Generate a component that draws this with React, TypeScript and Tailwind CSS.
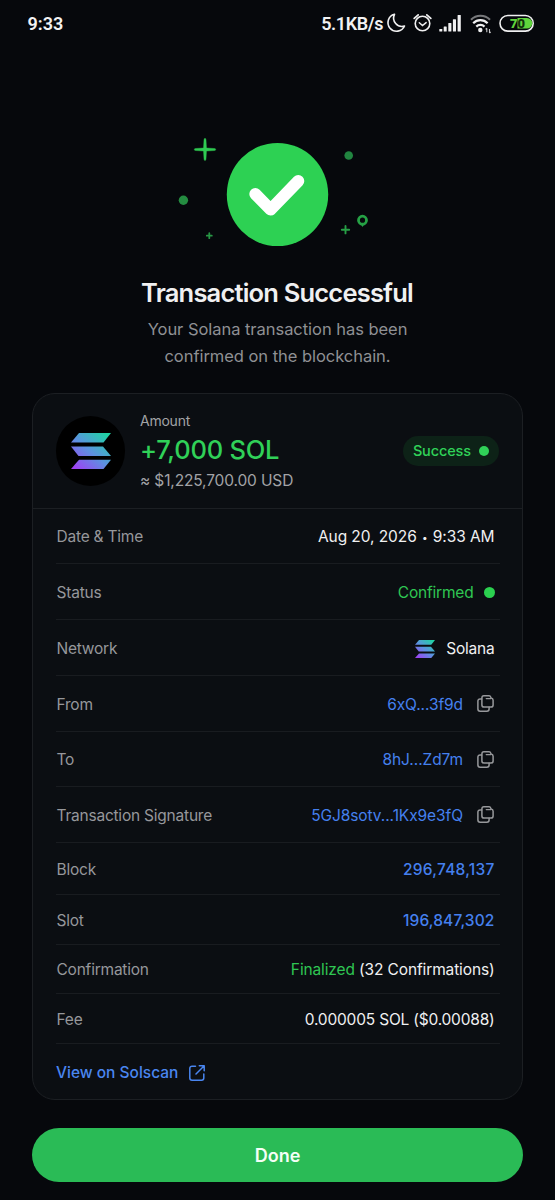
import { useId, type ReactNode } from "react";

type Row = { label: string; height: string; value: ReactNode };

function SolanaMark({ className }: { className?: string }) {
  const id = useId();

  return (
    <svg viewBox="0 0 40 36" className={className} preserveAspectRatio="none" aria-hidden="true">
      <defs>
        <linearGradient id={id} gradientUnits="userSpaceOnUse" x1="4" y1="36" x2="34" y2="0">
          <stop offset="0" stopColor="#a040f5" />
          <stop offset="0.5" stopColor="#5c92e0" />
          <stop offset="1" stopColor="#20d3a5" />
        </linearGradient>
      </defs>
      <g fill={`url(#${id})`}>
        <path d="M8 0h32l-7.500 9.500H0z" />
        <path d="M0 13.500h32l8 9.500H7.500z" />
        <path d="M8 26.800h32l-7.500 9.200H0z" />
      </g>
    </svg>
  );
}

function CopyIcon() {
  return (
    <svg
      width="17"
      height="17"
      viewBox="0 0 17 17"
      fill="none"
      stroke="#97989b"
      strokeWidth="1.5"
      strokeLinecap="round"
      strokeLinejoin="round"
      aria-hidden="true"
    >
      <path d="M6.900.8h5.200c1.400 0 1.600 1.200 2 2.200 1.400.2 2 .9 2 2.200v4.700a2.200 2.200 0 0 1-2.200 2.200H7.100a2.200 2.200 0 0 1-2.200-2.200V2.900A2.100 2.100 0 0 1 6.900.8z" />
      <path d="M9.200 3.600h4.600" strokeWidth="1.200" />
      <path d="M4.700 3.900H3A2.100 2.100 0 0 0 .9 6v8A2.200 2.200 0 0 0 3.100 16.200h6.800a2.200 2.200 0 0 0 2.200-2.200v-1.700" />
    </svg>
  );
}

function ExternalIcon() {
  return (
    <svg
      width="16"
      height="16"
      viewBox="0 0 16 16"
      fill="none"
      stroke="#4a86f0"
      strokeWidth="1.500"
      strokeLinecap="round"
      strokeLinejoin="round"
      aria-hidden="true"
    >
      <path d="M6.500 1.200H3A2.200 2.200 0 0 0 .8 3.400V13A2.200 2.200 0 0 0 3 15.200h9.600a2.200 2.200 0 0 0 2.200-2.200V9" />
      <path d="M10.300.8h4.900v5M15 1L7 9" />
    </svg>
  );
}

function Address({ children }: { children: ReactNode }) {
  return (
    <span className="flex items-center gap-[14px] pr-[0.500px] tracking-[-0.080px] text-[#4580ee]">
      {children}
      <button aria-label="Copy" className="pb-[2px]">
        <CopyIcon />
      </button>
    </span>
  );
}

const rows: Row[] = [
  {
    label: "Date & Time",
    height: "h-[55px]",
    value: (
      <span className="tracking-[-0.080px]">
        Aug 20, 2026 <span className="mx-[1px] align-[1px] text-[10px]">&bull;</span> 9:33 AM
      </span>
    ),
  },
  {
    label: "Status",
    height: "h-14",
    value: (
      <span className="flex items-center gap-[10px] tracking-[-0.200px] text-[#2fc653]">
        Confirmed
        <span className="size-[11px] rounded-full bg-[#2bd04f]" />
      </span>
    ),
  },
  {
    label: "Network",
    height: "h-14",
    value: (
      <span className="flex items-center gap-[11px] tracking-[-0.200px]">
        <SolanaMark className="h-[18px] w-[20px]" />
        Solana
      </span>
    ),
  },
  { label: "From", height: "h-14", value: <Address>6xQ...3f9d</Address> },
  { label: "To", height: "h-[55px]", value: <Address>8hJ...Zd7m</Address> },
  { label: "Transaction Signature", height: "h-14", value: <Address>5GJ8sotv...1Kx9e3fQ</Address> },
  {
    label: "Block",
    height: "h-[52px]",
    value: <span className="font-medium tracking-[0.230px] text-[#4580ee]">296,748,137</span>,
  },
  {
    label: "Slot",
    height: "h-[50px]",
    value: <span className="font-medium tracking-[0.120px] text-[#4580ee]">196,847,302</span>,
  },
  {
    label: "Confirmation",
    height: "h-[49px]",
    value: (
      <span className="tracking-[-0.130px]">
        <span className="text-[#2fc653]">Finalized</span> (32 Confirmations)
      </span>
    ),
  },
  {
    label: "Fee",
    height: "h-[50px]",
    value: <span className="tracking-[-0.200px]">0.000005 SOL ($0.00088)</span>,
  },
];

function StatusBar() {
  return (
    <header className="flex h-[46px] items-center justify-between pr-[19px] pl-[27.500px] font-[Roboto,sans-serif] text-[18px] font-semibold text-[#f2f2f3]">
      <span>9:33</span>
      <div className="flex items-center">
        <span className="mr-[1px] tracking-[-0.400px]">5.1KB/s</span>
        <svg width="152" height="24" viewBox="384 11 152 24" fill="none" stroke="#f0f0f1" aria-hidden="true">
          <path
            d="M394.500 14.300a8.600 8.600 0 1 0 10 11.700a8.400 8.400 0 0 1-10-11.700z"
            strokeWidth="1.600"
            strokeLinejoin="round"
          />
          <circle cx="422.500" cy="23.500" r="7.300" strokeWidth="1.600" />
          <path d="M419.300 22.800l3.200 2.800 3.600-3" strokeWidth="1.500" strokeLinecap="round" />
          <path d="M414.200 18.400l4-3.500M430.800 18.400l-4-3.500" strokeWidth="1.800" strokeLinecap="round" />
          <g fill="#f0f0f1" stroke="none">
            <rect x="439.300" y="29" width="3" height="2.500" rx="0.500" />
            <rect x="443.700" y="26.500" width="3" height="5" rx="0.500" />
            <rect x="448.300" y="23" width="3.100" height="8.500" rx="0.500" />
            <rect x="452.900" y="19.300" width="3.100" height="12.200" rx="0.500" />
            <rect x="457.600" y="15" width="3.200" height="16.500" rx="0.500" />
            <circle cx="480.300" cy="30" r="2.200" />
          </g>
          <path d="M471 19.800a13.200 13.200 0 0 1 19 0" stroke="#77787b" strokeWidth="2" />
          <path d="M473.200 23.200a10 10 0 0 1 14.400 0M476.300 26.600a5.800 5.800 0 0 1 8.200 0" strokeWidth="2.200" />
          <path
            d="M486.800 28.300v4M485.600 29.300l1.200-1.200M489.500 29v4M490.700 31.800l-1.200 1.200"
            stroke="#c8c8ca"
            strokeWidth="1.100"
          />
          <rect x="500" y="15.500" width="33.200" height="15.600" rx="7.800" strokeWidth="1.600" />
          <path d="M517.500 18h9.500a5.300 5.300 0 0 1 0 10.600h-9.500z" fill="#5fd53c" stroke="none" />
          <g className="font-[Roboto,sans-serif] text-[13px] font-black" stroke="none">
            <text x="510" y="28" fill="#5fd53c">
              7
            </text>
            <text x="517.500" y="28" fill="#12300b">
              0
            </text>
          </g>
        </svg>
      </div>
    </header>
  );
}

function SuccessBadge() {
  return (
    <svg width="199" height="112" viewBox="178 136 199 112" fill="none" className="mx-auto" aria-hidden="true">
      <ellipse cx="277.500" cy="194.500" rx="50.700" ry="51.600" fill="#2dd153" />
      <path
        d="M255.300 194L270.600 209.600L298.300 181"
        stroke="#fff"
        strokeWidth="12"
        strokeLinecap="round"
        strokeLinejoin="round"
      />
      <path
        d="M205 138.300q.9 0 1 1.500l.5 8.200 8 .5q1.200.1 1.200 1t-1.200 1l-8 .5-.5 8q-.1 1.500-1 1.500t-1-1.500l-.5-8-8-.5q-1.200-.1-1.200-1t1.200-1l8-.5.5-8.200q.1-1.500 1-1.500z"
        fill="#2fca52"
        stroke="#2fca52"
        strokeWidth="0.400"
      />
      <circle cx="183.400" cy="200.200" r="4.700" fill="#248c41" />
      <circle cx="348.700" cy="155.500" r="4.300" fill="#218540" />
      <path d="M209.300 233.200v5M206.800 235.700h5" stroke="#279645" strokeWidth="1.800" strokeLinecap="round" />
      <path d="M345.500 226v7.400M341.800 229.700h7.400" stroke="#279f46" strokeWidth="1.900" strokeLinecap="round" />
      <circle cx="362.500" cy="220.200" r="4" stroke="#25a145" strokeWidth="2.800" />
      <path d="M360.800 224.500h3.400l-1.700 2.600z" fill="#25a145" />
    </svg>
  );
}

export default function App() {
  return (
    <main className="flex h-[1200px] w-[555px] flex-col bg-[#06080c] font-[Inter,sans-serif] text-[#f0f0f1]">
      <StatusBar />

      <section className="pt-[90px] text-center">
        <SuccessBadge />
        <h1 className="mt-[28px] pr-[1px] text-[25.500px] leading-[34px] font-semibold tracking-[-0.800px]">
          Transaction Successful
        </h1>
        <p className="mt-[6px] text-[16.500px] leading-[26.500px] tracking-[-0.040px] text-[#8f9094]">
          Your Solana transaction has been
          <br />
          confirmed on the blockchain.
        </p>
      </section>

      <section className="mx-8 mt-[24px] h-[707px] rounded-[23px] border border-[#1c1f23] bg-[#0b0e12]">
        <div className="flex h-[115px] items-center border-b border-[#1c1f23] px-[23px]">
          <div className="flex h-[70px] w-[69px] items-center justify-center rounded-full bg-black">
            <SolanaMark className="h-9 w-10" />
          </div>
          <div className="ml-[15px] flex-1">
            <p className="text-[14px] leading-[18px] tracking-[-0.240px] text-[#a2a3a6]">Amount</p>
            <p className="mt-[3px] text-[25.500px] leading-[34px] font-medium tracking-[-0.220px] text-[#30d158]">
              +7,000 SOL
            </p>
            <p className="mt-[4px] text-[15.500px] leading-[20px] tracking-[-0.140px] text-[#a2a3a6]">
              ≈ $1,225,700.00 USD
            </p>
          </div>
          <div className="flex h-[30px] items-center gap-[8px] rounded-full bg-[#0d2217] px-[10px] text-[14.500px] font-medium tracking-[-0.120px] text-[#30d158]">
            Success
            <span className="size-[10px] rounded-full bg-[#30d158]" />
          </div>
        </div>

        <dl className="pr-[22px] pl-[23px] text-[15.500px]">
          {rows.map((row) => (
            <div
              key={row.label}
              className={`flex items-center justify-between border-b border-[#191c20] pt-[2px] pr-[5.500px] pl-[0.500px] ${row.height}`}
            >
              <dt className="tracking-[-0.220px] text-[#96979b]">{row.label}</dt>
              <dd>{row.value}</dd>
            </div>
          ))}
        </dl>

        <a className="flex h-[55px] items-center gap-[11px] px-[23px] pt-[2px] text-[15.500px] font-medium text-[#4a86f0]">
          View on Solscan
          <ExternalIcon />
        </a>
      </section>

      <button className="mx-8 mt-[28px] h-[54px] rounded-full bg-[#2abb56] text-[18px] font-semibold text-[#f4fff6]">
        Done
      </button>
    </main>
  );
}
